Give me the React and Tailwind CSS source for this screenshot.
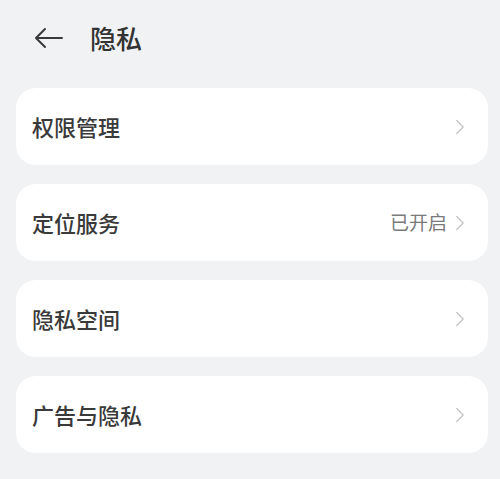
import { ChevronRight } from "lucide-react";

const items = [
  { label: "权限管理" },
  { label: "定位服务", value: "已开启" },
  { label: "隐私空间" },
  { label: "广告与隐私" },
];

export default function App() {
  return (
    <div
      className="h-[479px] w-[500px] bg-[#f1f2f4] pl-4 pr-3 pt-[18px]"
      style={{ fontFamily: '"Noto Sans CJK SC", "Noto Sans", sans-serif' }}
    >
      <div className="flex h-[40px] items-center gap-[26px] pl-[18px]">
        <svg width="30" height="22" viewBox="0 0 30 22" fill="none" stroke="#3a3a3a" strokeWidth="2" strokeLinecap="round" strokeLinejoin="round">
          <path d="M28 11H3M11 2L2 11l9 9" />
        </svg>
        <h1 className="text-[26px] font-medium leading-none text-[#333]">隐私</h1>
      </div>

      <div className="mt-[30px] flex flex-col gap-[19px]">
        {items.map((item) => (
          <div
            key={item.label}
            className="flex h-[77px] items-center justify-between rounded-[20px] bg-white pl-4 pr-[15px]"
          >
            <span className="text-[22px] font-medium text-[#3a3a3a]">{item.label}</span>
            <div className="flex items-center">
              {item.value && (
                <span className="text-[19px] text-[#7a7a7a]">{item.value}</span>
              )}
              <ChevronRight size={26} strokeWidth={1.2} className="text-[#c4c4c4]" />
            </div>
          </div>
        ))}
      </div>
    </div>
  );
}
